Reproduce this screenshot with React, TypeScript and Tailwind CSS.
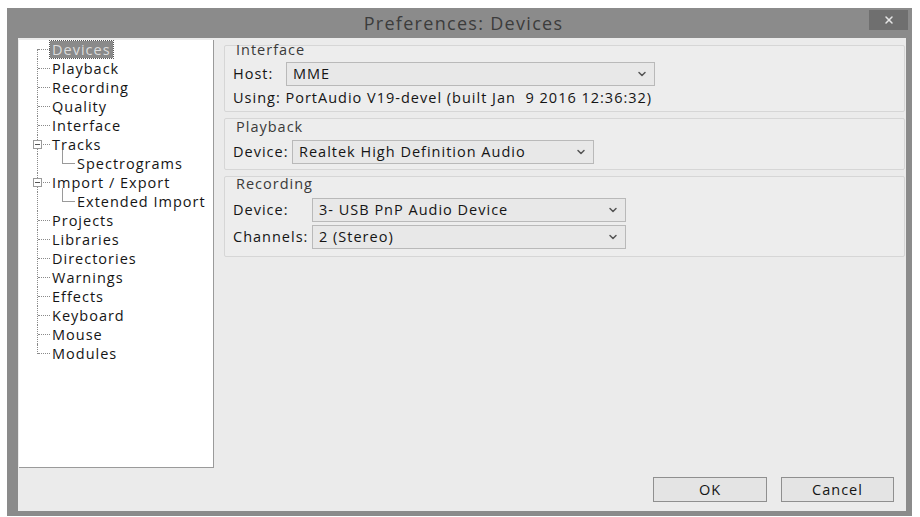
import { ChevronDown, X } from "lucide-react";

type Node = { label: string; level: 0 | 1; box?: boolean; selected?: boolean };

const nodes: Node[] = [
  { label: "Devices", level: 0, selected: true },
  { label: "Playback", level: 0 },
  { label: "Recording", level: 0 },
  { label: "Quality", level: 0 },
  { label: "Interface", level: 0 },
  { label: "Tracks", level: 0, box: true },
  { label: "Spectrograms", level: 1 },
  { label: "Import / Export", level: 0, box: true },
  { label: "Extended Import", level: 1 },
  { label: "Projects", level: 0 },
  { label: "Libraries", level: 0 },
  { label: "Directories", level: 0 },
  { label: "Warnings", level: 0 },
  { label: "Effects", level: 0 },
  { label: "Keyboard", level: 0 },
  { label: "Mouse", level: 0 },
  { label: "Modules", level: 0 },
];

function TreeRow({ node, first, last }: { node: Node; first: boolean; last: boolean }) {
  const gutter = node.level === 0 ? "w-[31px]" : "w-[56px]";
  return (
    <div className="flex h-[19px] items-center">
      <div className={`relative h-full shrink-0 ${gutter}`}>
        {/* main trunk */}
        <div
          className={`absolute left-[18px] border-l border-dotted border-[#8a8a8a] ${
            first ? "top-[9px] bottom-0" : last ? "top-0 h-[10px]" : "top-0 bottom-0"
          }`}
        />
        {node.level === 0 ? (
          <div className="absolute left-[19px] top-[9px] w-[12px] border-t border-dotted border-[#8a8a8a]" />
        ) : (
          <>
            <div className="absolute left-[43px] top-[-4px] h-[14px] border-l border-[#9a9a9a]" />
            <div className="absolute left-[43px] top-[9px] w-[13px] border-t border-[#9a9a9a]" />
          </>
        )}
        {node.box && (
          <div className="absolute left-[14px] top-[5px] flex h-[9px] w-[9px] items-center justify-center border border-[#9a9a9a] bg-white">
            <div className="h-px w-[5px] bg-[#555]" />
          </div>
        )}
      </div>
      <span
        className={
          node.selected
            ? "bg-[#8a8a8a] px-[2px] leading-[17px] text-[#dcdcdc] outline outline-1 outline-dotted outline-[#555]"
            : "px-[2px] text-[#151515]"
        }
      >
        {node.label}
      </span>
    </div>
  );
}

function Combo({ value, width }: { value: string; width: string }) {
  return (
    <div
      className={`flex h-[24px] shrink-0 items-center justify-between border border-[#b9b9b9] bg-[#e8e8e8] pl-[6px] pr-[6px] text-[#151515] ${width}`}
    >
      <span>{value}</span>
      <ChevronDown size={12} strokeWidth={3} className="text-[#555]" />
    </div>
  );
}

function Group({
  title,
  titleClass,
  className,
  children,
}: {
  title: string;
  titleClass: string;
  className: string;
  children: React.ReactNode;
}) {
  return (
    <div className={`rounded-[2px] border border-[#d6d6d6] bg-[#ededed] px-[7px] ${className}`}>
      <div className={`h-[16px] pl-[4px] text-[#3a3a3a] ${titleClass}`}>{title}</div>
      {children}
    </div>
  );
}

export default function App() {
  return (
    <div
      className="h-[517px] w-[920px] overflow-hidden bg-white pl-[7px] pr-[8px] pt-[8px] pb-[1px] text-[14.5px] tracking-[1px]"
      style={{ fontFamily: '"Open Sans", "Noto Sans", sans-serif' }}
    >
      <div className="flex h-full flex-col bg-[#8b8b8b]">
        {/* title bar */}
        <div className="relative flex h-[30px] shrink-0 items-center justify-center">
          <span className="ml-[8px] text-[18px] tracking-[1.3px] text-[#3c3c3c]">Preferences: Devices</span>
          <div className="absolute right-[4px] top-[2px] flex h-[20px] w-[39px] items-center justify-center bg-[#6f6f6f]">
            <X size={12} strokeWidth={3} className="text-[#e6e6e6]" />
          </div>
        </div>

        {/* client area */}
        <div className="mb-[5px] ml-[11px] mr-[6px] flex flex-1 flex-col bg-[#ebebeb]">
          <div className="flex flex-1">
            <div className="ml-[1px] mt-[2px] w-[195px] border-b border-r border-[#9a9a9a] bg-white">
              {nodes.map((n, i) => (
                <TreeRow key={n.label} node={n} first={i === 0} last={i === nodes.length - 1} />
              ))}
            </div>

            <div className="flex flex-1 flex-col gap-[6px] pl-[10px] pr-[1px] pt-[7px]">
              <Group title="Interface" titleClass="leading-[7px]" className="pb-[1px]">
                <div className="flex items-center pl-[1px]">
                  <span className="w-[53px] text-[#151515]">Host:</span>
                  <Combo value="MME" width="w-[369px]" />
                </div>
                <div className="pl-[1px] leading-[24px] text-[#151515]">
                  Using: PortAudio V19-devel (built Jan&nbsp;&nbsp;9 2016 12:36:32)
                </div>
              </Group>

              <Group title="Playback" titleClass="leading-[16px]" className="pb-[5px]">
                <div className="flex items-center pl-[1px] pt-[5px]">
                  <span className="w-[59px] text-[#151515]">Device:</span>
                  <Combo value="Realtek High Definition Audio" width="w-[302px]" />
                </div>
              </Group>

              <Group title="Recording" titleClass="leading-[14px]" className="pb-[7px]">
                <div className="flex flex-col gap-[3px] pl-[1px] pt-[5px]">
                  <div className="flex items-center">
                    <span className="w-[79px] text-[#151515]">Device:</span>
                    <Combo value="3- USB PnP Audio Device" width="w-[314px]" />
                  </div>
                  <div className="flex items-center">
                    <span className="w-[79px] text-[#151515]">Channels:</span>
                    <Combo value="2 (Stereo)" width="w-[314px]" />
                  </div>
                </div>
              </Group>
            </div>
          </div>

          {/* buttons */}
          <div className="flex h-[43px] shrink-0 items-center justify-end gap-[14px] pr-[12px]">
            <button className="h-[25px] w-[114px] border border-[#8f8f8f] bg-[#e4e4e4] text-[#151515]">OK</button>
            <button className="h-[25px] w-[113px] border border-[#8f8f8f] bg-[#e4e4e4] text-[#151515]">Cancel</button>
          </div>
        </div>
      </div>
    </div>
  );
}
